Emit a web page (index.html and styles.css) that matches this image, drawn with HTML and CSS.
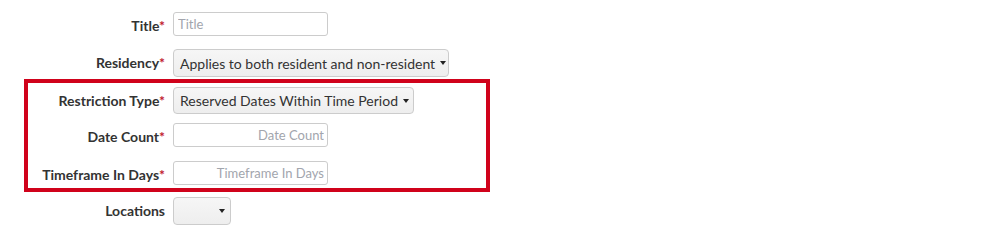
FILE: index.html
```html
<!DOCTYPE html>
<html lang="en">
<head>
<meta charset="utf-8">
<title>Restriction form</title>
<link rel="stylesheet" href="styles.css">
</head>
<body>
<form class="form">
  <div class="row row-title">
    <label class="lbl">Title<span class="req">*</span></label>
    <input class="text" type="text" placeholder="Title">
  </div>
  <div class="row row-residency">
    <label class="lbl">Residency<span class="req">*</span></label>
    <button type="button" class="select sel-residency"><span>Applies to both resident and non-resident</span><span class="caret"></span></button>
  </div>
  <div class="highlight">
    <div class="row row-restriction">
      <label class="lbl">Restriction Type<span class="req">*</span></label>
      <button type="button" class="select sel-restriction"><span>Reserved Dates Within Time Period</span><span class="caret"></span></button>
    </div>
    <div class="row row-count">
      <label class="lbl">Date Count<span class="req">*</span></label>
      <input class="text text-right" type="text" placeholder="Date Count">
    </div>
    <div class="row row-timeframe">
      <label class="lbl">Timeframe In Days<span class="req">*</span></label>
      <input class="text text-right" type="text" placeholder="Timeframe In Days">
    </div>
  </div>
  <div class="row row-locations">
    <label class="lbl">Locations</label>
    <button type="button" class="select sel-locations"><span></span><span class="caret"></span></button>
  </div>
</form>
</body>
</html>
```
FILE: styles.css
```css
html, body {
  margin: 0;
  padding: 0;
  background: #ffffff;
}

body {
  font-family: Lato, "Open Sans", "Liberation Sans", sans-serif;
  color: #333333;
}

.form {
  display: flex;
  flex-direction: column;
  padding-top: 12px;
  --lw: 165px;
}

.row {
  display: flex;
  align-items: center;
  gap: 8px;
}

.lbl {
  width: var(--lw);
  flex: none;
  text-align: right;
  font-size: 14px;
  font-weight: 700;
  color: #333333;
  white-space: nowrap;
  line-height: 18px;
}

.row-title .lbl,
.row-count .lbl,
.row-timeframe .lbl {
  padding-top: 3px;
}

.req {
  color: #c0182c;
  font-size: 14px;
  font-weight: 700;
  margin-left: 0;
}

.text {
  box-sizing: border-box;
  width: 155px;
  height: 24px;
  margin: 0;
  padding: 0 3px 0 4px;
  border: 1px solid #cccccc;
  border-radius: 3px;
  background: #ffffff;
  font-family: Lato, "Open Sans", "Liberation Sans", sans-serif;
  font-size: 13px;
  color: #333333;
  outline: none;
}

.text::placeholder {
  color: #a2a5ad;
  opacity: 1;
}

.text-right {
  text-align: right;
}

.select {
  box-sizing: border-box;
  display: flex;
  align-items: center;
  justify-content: space-between;
  height: 28px;
  margin: 0;
  padding: 0 6px 0 6px;
  border: 1px solid #cccccc;
  border-radius: 4px;
  background: linear-gradient(#f6f6f6, #eeeeee);
  font-family: Lato, "Open Sans", "Liberation Sans", sans-serif;
  font-size: 14px;
  color: #333333;
  white-space: nowrap;
  cursor: pointer;
}

.caret {
  width: 0;
  height: 0;
  border-left: 3.5px solid transparent;
  border-right: 3.5px solid transparent;
  border-top: 4px solid #222222;
  margin-left: 5px;
}

.sel-residency { width: 276px; }
.sel-restriction { width: 241px; height: 27px; }
.sel-locations { width: 58px; padding-right: 5px; }

.row-title { margin-bottom: 13px; }
.row-residency { margin-bottom: 2px; }

.highlight {
  box-sizing: border-box;
  width: 466px;
  margin-left: 24px;
  border: 4px solid #d0021b;
  padding: 4px 0 3px 0;
  display: flex;
  flex-direction: column;
  --lw: 137px;
}

.row-restriction { margin-bottom: 9px; }
.row-count { margin-bottom: 14px; }

.row-locations { margin-top: 5px; }
```
